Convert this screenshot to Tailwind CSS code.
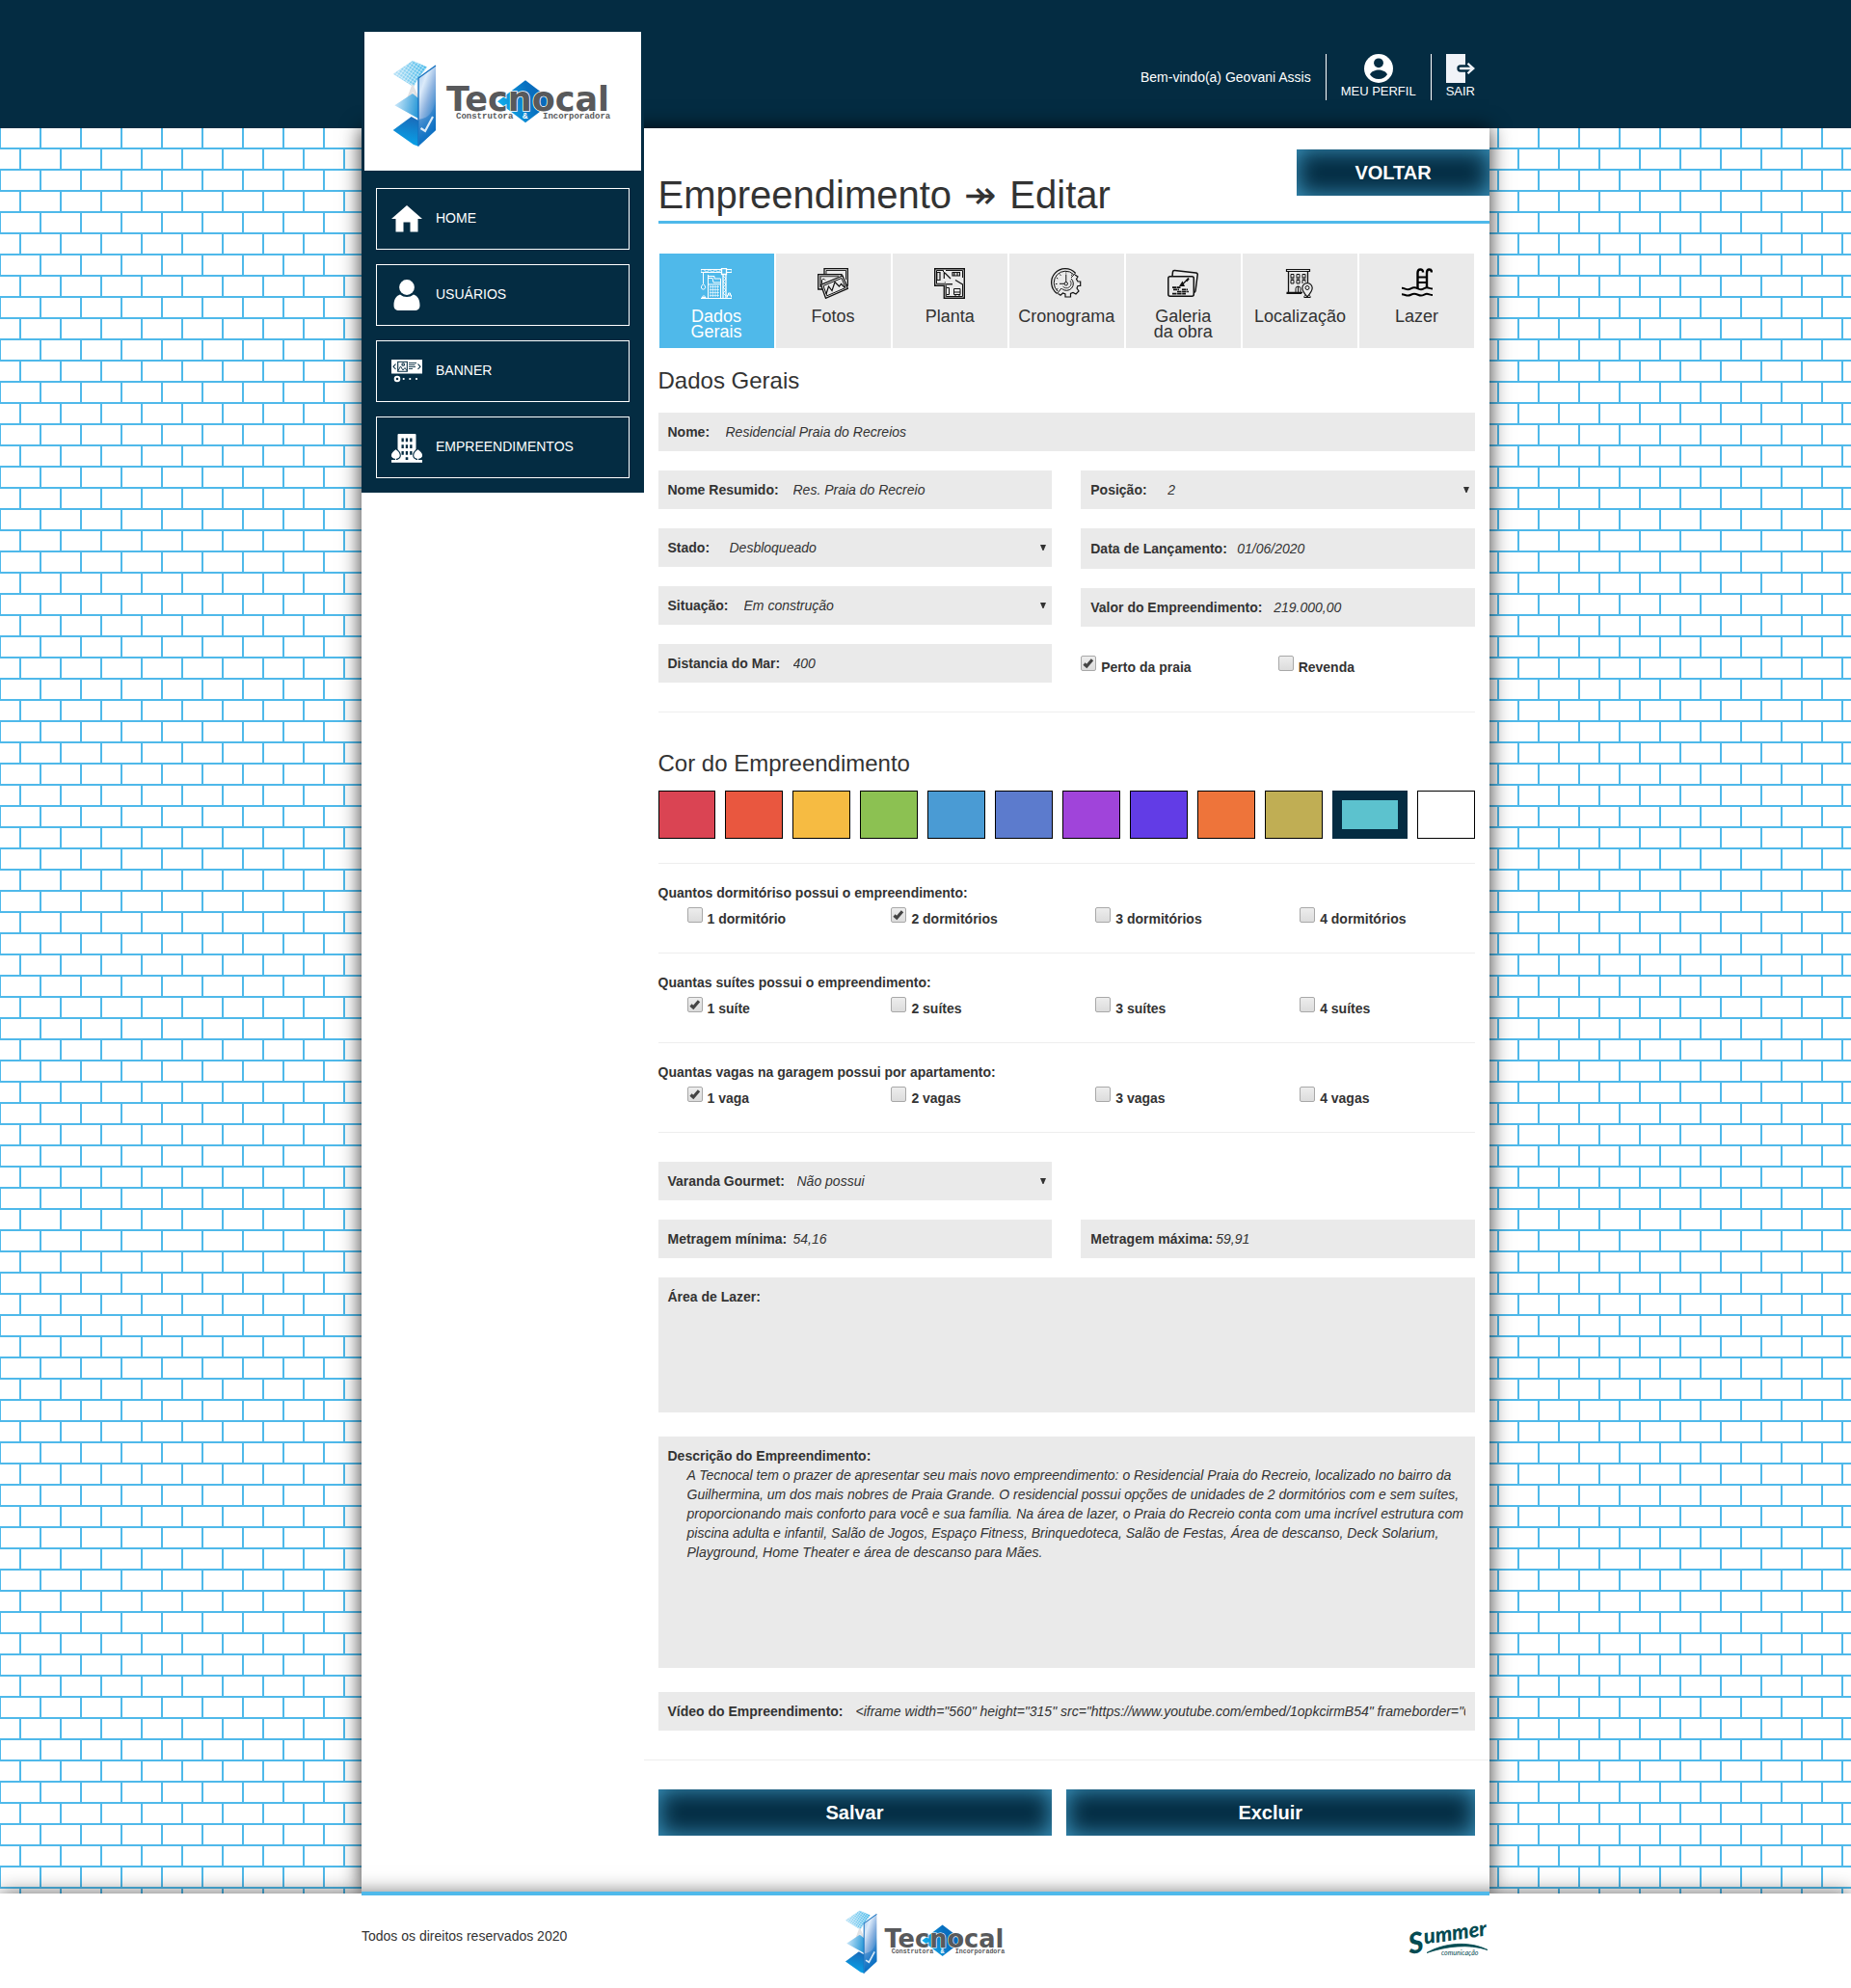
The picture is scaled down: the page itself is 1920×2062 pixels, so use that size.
<!DOCTYPE html>
<html lang="pt-BR">
<head>
<meta charset="utf-8">
<meta name="viewport" content="width=device-width, initial-scale=1">
<title>Tecnocal - Empreendimento - Editar</title>
<script src="https://cdn.jsdelivr.net/npm/@tailwindcss/browser@4"></script>
</head>
<body class="bg-white font-[family-name:'Liberation_Sans',Arial,sans-serif] text-sm leading-5 text-[#333]">

<!-- Shared gradients and symbols -->
<svg class="absolute size-0" aria-hidden="true">
  <defs>
    <linearGradient id="gPanel" x1="0" y1="0" x2="0.6" y2="1"><stop offset="0" stop-color="#9cc4ea"/><stop offset=".3" stop-color="#dcebfa"/><stop offset=".55" stop-color="#8fb4e0"/><stop offset="1" stop-color="#0a6fc2"/></linearGradient>
    <linearGradient id="gShade" x1="0" y1="0" x2="0" y2="1"><stop offset="0" stop-color="#1273c6" stop-opacity=".1"/><stop offset="1" stop-color="#0a6fc2"/></linearGradient>
    <linearGradient id="gSky" x1="0" y1="0" x2="1" y2="0"><stop offset="0" stop-color="#b5e0f6"/><stop offset="1" stop-color="#3db5e8"/></linearGradient>
    <linearGradient id="gMid" x1="0" y1="0.3" x2="1" y2="0.5"><stop offset="0" stop-color="#cfeafb"/><stop offset="1" stop-color="#2c9ad8"/></linearGradient>
    <linearGradient id="gDeep" x1="0.6" y1="0" x2="0.4" y2="1"><stop offset="0" stop-color="#1a6cba"/><stop offset="1" stop-color="#06a6ec"/></linearGradient>
    <linearGradient id="gGem" x1="0" y1="0.6" x2="1" y2="0.3"><stop offset="0" stop-color="#12b0ee"/><stop offset=".6" stop-color="#0870c0"/><stop offset="1" stop-color="#0a63b4"/></linearGradient>
    <pattern id="pGrid" width="3" height="3" patternUnits="userSpaceOnUse" patternTransform="rotate(35)"><path d="M0 0H3M0 0V3" stroke="#fff" stroke-width=".9"/></pattern>
  </defs>
  <symbol id="mark" viewBox="0 0 228 90">
    <path d="M0.7 14.7 21 1 36 7.5 27 19 22 28Z" fill="url(#gSky)"/>
    <path d="M0.7 14.7 21 1 36 7.5 27 19 22 28Z" fill="url(#pGrid)"/>
    <path d="M15 45 21 29 27 42" fill="none" stroke="#e2e2e4" stroke-width="3.5"/>
    <path d="M2.3 47.3 21 35 27 40V61Z" fill="url(#gMid)"/>
    <path d="M0.7 73 19.7 59 27 63V89.7L22 88Z" fill="url(#gDeep)"/>
    <path d="M27 19 45 5.7V73L27 89.7Z" fill="url(#gPanel)"/>
    <path d="M27.5 62C36 60 42 58 45 40V73L27.5 89Z" fill="url(#gShade)"/>
    <path d="M27 89.5V19L45 6" fill="none" stroke="#1470bf" stroke-width="1.4"/>
    <path d="M29.500 71 34 74 42 59" fill="none" stroke="#dcebf8" stroke-width="2.200"/>
    <path d="M138 21.300 167 43.300 138 65.300 109 43.300Z" fill="url(#gGem)"/>
  </symbol>
  <symbol id="check" viewBox="0 0 16 16"><path d="M3.500 8.500 6.200 11 12 4.300" fill="none" stroke="#444" stroke-width="3.200"/></symbol>
  <symbol id="arrow" viewBox="0 0 6 6"><path d="M0 0H6L3.500 6H2.500Z" fill="#333"/></symbol>
</svg>

<header class="h-[133px] bg-[#042c42] text-white">
  <div class="mx-auto flex max-w-[1170px] justify-end pt-14 pr-[15px]">
    <p class="flex h-12 items-center border-r border-white pr-[15px]">Bem-vindo(a) Geovani Assis</p>
    <a href="#perfil" class="flex h-12 flex-col items-center border-r border-white px-[15px] text-[13px] leading-[18px]">
      <svg class="size-[30px]" viewBox="0 0 30 30" aria-hidden="true"><circle cx="15" cy="15" r="15" fill="#fff"/><circle cx="15" cy="9.300" r="4.900" fill="#042c42"/><path d="M6 21.300C7 18 12 16.500 15 16.500S23 18 24 21.300C22 24.300 19 26 15 26S8 24.300 6 21.300Z" fill="#042c42"/></svg>
      MEU PERFIL
    </a>
    <a href="#sair" class="flex h-12 flex-col items-center pl-[15px] text-[13px] leading-[18px]">
      <svg class="size-[30px]" viewBox="0 0 30 30" aria-hidden="true"><path d="M0 0H20V30H0Z" fill="#f0f3f8"/><path d="M20 11.300H15a3.700 3.700 0 0 0 0 7.400H20Z" fill="#042c42"/><path d="M15 13.700H25L21.700 10.500 23.300 9 30 15 23.300 21 21.700 19.500 25 16.300H15a1.300 1.300 0 0 1 0-2.600Z" fill="#f0f3f8"/></svg>
      SAIR
    </a>
  </div>
</header>

<main class="bg-white bg-[linear-gradient(0deg,#4fb9ea_2px,transparent_2px),conic-gradient(from_270deg_at_2px_22px,#4fb9ea_90deg,transparent_0),conic-gradient(from_270deg_at_2px_22px,#4fb9ea_90deg,transparent_0)] bg-[size:42px_22px,42px_44px,42px_44px] bg-[position:0_0,-1px_0,20px_22px]">
  <div class="mx-auto flex max-w-[1170px] items-start bg-white shadow-[0_0_20px_rgba(0,0,0,0.8)]">

    <aside class="relative -mt-[103px] w-1/4 shrink-0 bg-[#042c42] p-[3px] pb-[15px]">
      <a href="#home" class="flex h-36 items-center justify-center bg-white pt-1" aria-label="Tecnocal">
        <svg class="h-[90px] w-[228px] overflow-visible" viewBox="0 0 228 90" fill="#58595b" font-weight="bold" aria-hidden="true">
          <use href="#mark" width="228" height="90"/>
          <text x="56" y="53" font-family="DejaVu Sans, sans-serif" font-size="35" stroke="#fff" stroke-width="1.500" paint-order="stroke">Tecnocal</text>
          <g font-family="Liberation Mono, monospace" font-size="9"><text x="66" y="61">Construtora</text><text x="135" y="61" fill="#fff">&amp;</text><text x="156" y="61">Incorporadora</text></g>
        </svg>
      </a>
      <nav class="flex flex-col gap-[15px] px-3 pt-[18px] text-white">
        <a href="#home" class="flex h-16 items-center gap-3.5 border border-white px-[15px]">
          <svg class="size-8" viewBox="0 0 32 32" fill="#fff" aria-hidden="true"><path d="M16 2 32 16H27.500V29.500H19.500V19.500H12.500V29.500H4.500V16H0Z"/></svg>
          <span class="pb-0.5">HOME</span>
        </a>
        <a href="#usuarios" class="flex h-16 items-center gap-3.5 border border-white px-[15px]">
          <svg class="size-8" viewBox="0 0 32 32" fill="#fff" aria-hidden="true"><circle cx="16" cy="8" r="7.900"/><path d="M9 15.500C11 17.200 13.500 18 16 18S21 17.200 23 15.500C27.500 17 29.500 21 29.500 26.500 29.500 30.500 27.500 32 24 32H8C4.500 32 2.500 30.500 2.500 26.500 2.500 21 4.500 17 9 15.500Z"/></svg>
          <span class="pb-0.5">USUÁRIOS</span>
        </a>
        <a href="#banner" class="flex h-16 items-center gap-3.5 border border-white px-[15px]">
          <svg class="size-8" viewBox="0 0 32 32" aria-hidden="true"><path d="M0 4H32V18.500H0Z" fill="#fff"/><g fill="none" stroke="#042c42" stroke-width="1.100"><path d="M4.500 8.500 2 11.300 4.500 14M27.500 8.500 30 11.300 27.500 14"/><path d="M6.700 6.300H16.300V16.300H6.700Z"/><path d="M7 15.500 9.500 11 12 15 14 12.500 16 15.500M18 7.500H26M18 9.500H24.500M18 11.500H25M18 13.500H22" stroke-width=".9"/><circle cx="12.200" cy="9" r="1.300"/></g><circle cx="6" cy="24" r="2.300" fill="none" stroke="#fff" stroke-width="2"/><g fill="#fff"><circle cx="12.700" cy="24" r="1.100"/><circle cx="19.300" cy="24" r="1.100"/><circle cx="26" cy="24" r="1.100"/></g></svg>
          <span class="pb-0.5">BANNER</span>
        </a>
        <a href="#empreendimentos" class="flex h-16 items-center gap-3.5 border border-white px-[15px]">
          <svg class="size-8" viewBox="0 0 32 32" aria-hidden="true"><path d="M6.500 3Q6.500 2 7.500 2H24.500Q25.500 2 25.500 3V29H6.500Z" fill="#fff"/><g fill="#042c42"><path d="M10.500 6.500h2.300v3.700h-2.300zM14.800 6.500h2.300v3.700h-2.300zM19.200 6.500h2.300v3.700h-2.300zM10.500 13.300h2.300v3.700h-2.300zM14.800 13.300h2.300v3.700h-2.300zM19.200 13.300h2.300v3.700h-2.300zM10.500 20h2.300v3.700h-2.300zM14.800 20h2.300v3.700h-2.300zM19.200 20h2.300v3.700h-2.300zM14.700 26.300h2.600v2.700h-2.600z"/></g><g fill="#fff" stroke="#042c42" stroke-width="1.100"><path d="M4.500 17.500C7.500 19.500 9.300 21.500 9.300 24.300 9.300 26.500 7.500 28 5.500 28.200V30H3.500V28.200C1.500 28 -.6 26.500 -.6 24.300 -.6 21.500 1.500 19.500 4.500 17.500Z"/><path d="M27.500 17.500C24.500 19.500 22.700 21.500 22.700 24.300 22.700 26.500 24.500 28 26.500 28.200V30H28.500V28.200C30.500 28 32.600 26.500 32.600 24.300 32.600 21.500 30.500 19.500 27.500 17.500Z"/></g><path d="M0 29H32V31.800H0Z" fill="#fff"/></svg>
          <span class="pb-0.5">EMPREENDIMENTOS</span>
        </a>
      </nav>
    </aside>

    <form class="min-w-0 flex-1 pb-[60px]">
      <div class="ml-[15px] flex items-start justify-between border-b-3 border-[#4fb9ea] pt-[22px] pb-[5px]">
        <h1 class="mt-[25px] h-11 text-[40px] leading-[44px]">Empreendimento <span class="mx-0.5">↠</span> Editar</h1>
        <button type="button" class="h-12 w-[200px] bg-[#042c42] text-xl font-bold text-white shadow-[inset_0_0_24px_rgba(79,185,234,0.8)]">VOLTAR</button>
      </div>

      <div class="px-[15px]">
        <nav class="mt-[31px] flex text-center text-lg leading-4">
          <a href="#dados" class="mx-px flex flex-1 basis-0 flex-col items-center gap-2.5 bg-[#4fb9ea] pt-[15px] pb-[9px] text-white">
            <svg class="size-8" viewBox="0 0 32 32" fill="none" stroke="#fff" aria-hidden="true"><path d="M0 1.500H21M0 4.500H21M0 1V5M3 1.500 6 4.500 9 1.500 12 4.500 15 1.500 18 4.500 21 1.500M27 1.500H32V4.500H27"/><path d="M21.500.5H26.500V6.500H21.500Z" stroke-width="1.300"/><path d="M23 6V31M26 6V31" stroke-width="1.300"/><path d="M23 8 26 11 23 14 26 17 23 20 26 23 23 26 26 29" stroke-width=".8"/><path d="M2.500 5V16M2.500 16.500 .8 18.500A2.200 2.200 0 1 0 4.400 18.800Z"/><path d="M7.500 31V7M7.500 8.500H14M7.500 10.500H12L13 15H20.500V31M14 8.500V11H20.500V16M7.500 17H20.500"/><path d="M10 18V30M12.500 18V30M15 18V30M17.500 18V30M9 19.500H19M9 22.500H19M9 25.500H19M9 28.500H19" stroke-width=".6"/><path d="M0 31.500H32" /><path d="M1 30.500 3 28.500 5 30.500ZM27.500 30.500V28H31.500V30.500M28.500 28V26H30.500V28"/></svg>
            <span>Dados<br>Gerais</span>
          </a>
          <a href="#fotos" class="mx-px flex flex-1 basis-0 flex-col items-center gap-2.5 bg-[#eaeaea] pt-[15px] pb-[9px]">
            <svg class="size-8" viewBox="0 0 32 32" fill="none" stroke="#111" aria-hidden="true"><path d="M7 6V.7H31.300V18H30" stroke-width="1.300"/><path d="M9 6V2.500H29.500V12" stroke-width=".9"/><path d="M5 22H.7V6.700H25V9" stroke-width="1.300"/><path d="M3 20V8.500H22" stroke-width="1.600" stroke="#555"/><path d="M4.500 16V12.500A2 2 0 0 1 8 12.500"/><path d="M3.500 17.300 26 8 31.300 21.300 8.500 31.300Z" fill="#eaeaea" stroke-width="1.300"/><path d="M6 18.500 25 10.500 29 20.500 9.800 28.800Z"/><path d="M9 27 11.500 19 15 23.500 18 14.500 22.500 19 24.500 16.500 28 20" stroke-width="1.200"/></svg>
            <span>Fotos</span>
          </a>
          <a href="#planta" class="mx-px flex flex-1 basis-0 flex-col items-center gap-2.5 bg-[#eaeaea] pt-[15px] pb-[9px]">
            <svg class="size-8" viewBox="0 0 32 32" fill="none" stroke="#111" aria-hidden="true"><path d="M.7.700H31.300V31.300H10.300V18.300H.7Z" stroke-width="1.400"/><path d="M2.500 2.500H9.500V4M12 2.500H29.500V10M29.500 16.500V29.500H12.300V16.500H19M2.500 2.500V16.300H12" /><path d="M2.800 4.500H6V12.500H2.800ZM10.300 4V11M11 5 17 11M18.500 4.500H27M19 4.500V8H26.500V4.500M21 5V7.500M24 5V7.500M29.500 17 22 12.500" stroke-width="1.200"/><path d="M13 20.500H15.500V27.500H13M20.500 21.500H27V27.500H20.500ZM20.500 25H27M22 27.500V29.500M26 27.500V29.500"/><path d="M6 17.300H19M11.300 14V30" stroke="#777"/></svg>
            <span>Planta</span>
          </a>
          <a href="#cronograma" class="mx-px flex flex-1 basis-0 flex-col items-center gap-2.5 bg-[#eaeaea] pt-[15px] pb-[9px]">
            <svg class="size-8" viewBox="0 0 32 32" fill="none" stroke="#111" aria-hidden="true"><path d="M6.500 26.500A14.300 14.300 0 1 1 25.500 5.300" stroke-width="1.300"/><path d="M7 24A11.800 11.800 0 1 1 23.500 6.500"/><path d="M25.500 5.300 21 10M6.500 26.500 11 21"/><path d="M25 7 28 9 26.500 11.500 28 14H30.700V18.500H28L27 21 29 24 26 27 23 25.500 20.500 26.500V30H15V27L12.500 26 10 28.300 7.500 26.500" stroke-width="1.200"/><path d="M21 11A7 7 0 0 1 11.500 21.500"/><path d="M20 13A4.500 4.500 0 1 1 12.500 19" stroke-width=".8"/><circle cx="15.800" cy="16.300" r="1.700"/><path d="M15.800 14.500V6.500M14 16.300H9M15.800 4.500V5.500M5 16.500H6.500M9.500 6.500 10.300 7.800M6 10.300 7.300 11M22 6.500 21.300 7.800M6 22.300 7.300 21.500"/></svg>
            <span>Cronograma</span>
          </a>
          <a href="#galeria" class="mx-px flex flex-1 basis-0 flex-col items-center gap-2.5 bg-[#eaeaea] pt-[15px] pb-[9px]">
            <svg class="size-8" viewBox="0 0 32 32" fill="none" stroke="#111" aria-hidden="true"><path d="M5 8.500 5.500 4Q5.800 2.300 7.500 2.500L29.500 5Q31.500 5.300 31.200 7L29 24Q28.800 25.500 27 25.500" stroke-width="1.500"/><rect x=".8" y="8.800" width="26.500" height="20.500" rx="2" stroke-width="1.500"/><path d="M12 19H18L15.500 13.500Z" fill="#111" stroke="none"/><path d="M15.500 17 22 10.500" stroke-width="1.200"/><path d="M19.500 13.500 22 11" stroke-width="2"/><path d="M5 20.200H14M6 22.300H12M15 22.300H21" stroke-width="1.700" stroke-dasharray="4 .5"/><path d="M10 24.500H22M5 26.600H19" stroke-width="1.600" stroke-dasharray="4.500 .6"/></svg>
            <span>Galeria<br>da obra</span>
          </a>
          <a href="#localizacao" class="mx-px flex flex-1 basis-0 flex-col items-center gap-2.5 bg-[#eaeaea] pt-[15px] pb-[9px]">
            <svg class="size-8" viewBox="0 0 32 32" fill="none" stroke="#111" aria-hidden="true"><path d="M2.500 1.500H26.500V3.500H2.500Z" stroke-width="1.200"/><path d="M4.500 4V25.500M24.500 4V15M2.500 25.500H19" stroke-width="1.300"/><path d="M2.500 26.500H18"/><path d="M7 6.500H10V10H7ZM13 6.500H16V10H13ZM19 6.500H22V10H19ZM7 12.500H10V16H7ZM13 12.500H16V16H13ZM19 16V12.500H22V14.500M6.500 11H10.500M12.500 11H16.500M18.500 11H22.500"/><path d="M12 25V21.500A2.500 2.500 0 0 1 17 21.500V25M14.500 19V25"/><path d="M24 30C21 26.500 18.800 23.500 18.800 20.800A5.200 5.200 0 0 1 29.200 20.800C29.200 23.500 27 26.500 24 30Z" stroke-width="1.200"/><circle cx="24" cy="20.500" r="2"/><path d="M20.500 29.500 22 28.500M27.500 29.500 26 28.500M20.500 30.500H27.500"/></svg>
            <span>Localização</span>
          </a>
          <a href="#lazer" class="mx-px flex flex-1 basis-0 flex-col items-center gap-2.5 bg-[#eaeaea] pt-[15px] pb-[9px]">
            <svg class="size-8" viewBox="0 0 32 32" fill="none" stroke="#000" stroke-width="2.400" aria-hidden="true"><path d="M16.500 21V5Q16.500 1.500 19.300 1.500T22 4.500M26 21V5Q26 1.500 28.500 1.500T31 4.500"/><path d="M16.500 9.500H26M16.500 15H26" stroke-width="1.800"/><path d="M0 20.800C3 20.800 4 22.300 6.500 22.300S10 20.300 13 20.300 17.500 22.300 20 22.300 24 20.300 26 20.300 29.500 21.500 32 21.500M0 27.300C3 27.300 4 28.600 6.500 28.600S10 26.800 13 26.800 17.500 28.600 20 28.600 24 26.800 26 26.800 29.500 28 32 28" stroke-width="2"/></svg>
            <span>Lazer</span>
          </a>
        </nav>

        <section>
          <h2 class="pt-[21px] pb-5 text-2xl leading-[26px]">Dados Gerais</h2>

          <div class="flex h-10 items-center bg-[#eaeaea] px-2.5">
            <label for="nome" class="w-[60px] shrink-0 font-bold">Nome:</label>
            <input id="nome" type="text" value="Residencial Praia do Recreios" class="min-w-0 flex-1 italic outline-none">
          </div>

          <div class="mt-5 grid grid-cols-2 gap-x-[30px]">
            <div class="flex flex-col gap-5">
              <div class="flex h-10 items-center bg-[#eaeaea] px-2.5">
                <label for="resumido" class="w-[130px] shrink-0 font-bold">Nome Resumido:</label>
                <input id="resumido" type="text" value="Res. Praia do Recreio" class="min-w-0 flex-1 italic outline-none">
              </div>
              <div class="flex h-10 items-center bg-[#eaeaea] pr-1.5 pl-2.5">
                <label for="stado" class="w-16 shrink-0 font-bold">Stado:</label>
                <select id="stado" class="min-w-0 flex-1 appearance-none italic outline-none"><option>Desbloqueado</option><option>Bloqueado</option></select>
                <svg class="size-1.5" aria-hidden="true"><use href="#arrow"/></svg>
              </div>
              <div class="flex h-10 items-center bg-[#eaeaea] pr-1.5 pl-2.5">
                <label for="situacao" class="w-[79px] shrink-0 font-bold">Situação:</label>
                <select id="situacao" class="min-w-0 flex-1 appearance-none italic outline-none"><option>Em construção</option><option>Lançamento</option></select>
                <svg class="size-1.5" aria-hidden="true"><use href="#arrow"/></svg>
              </div>
              <div class="flex h-10 items-center bg-[#eaeaea] px-2.5">
                <label for="distancia" class="w-[130px] shrink-0 font-bold">Distancia do Mar:</label>
                <input id="distancia" type="text" value="400" class="min-w-0 flex-1 italic outline-none">
              </div>
            </div>
            <div class="flex flex-col gap-5">
              <div class="flex h-10 items-center bg-[#eaeaea] pr-1.5 pl-2.5">
                <label for="posicao" class="w-20 shrink-0 font-bold">Posição:</label>
                <select id="posicao" class="min-w-0 flex-1 appearance-none italic outline-none"><option>2</option><option>1</option></select>
                <svg class="size-1.5" aria-hidden="true"><use href="#arrow"/></svg>
              </div>
              <div class="flex h-[42px] items-center bg-[#eaeaea] px-2.5">
                <label for="data" class="w-[152px] shrink-0 font-bold">Data de Lançamento:</label>
                <input id="data" type="text" value="01/06/2020" class="min-w-0 flex-1 italic outline-none">
              </div>
              <div class="flex h-10 items-center bg-[#eaeaea] px-2.5">
                <label for="valor" class="w-[190px] shrink-0 font-bold">Valor do Empreendimento:</label>
                <input id="valor" type="text" value="219.000,00" class="min-w-0 flex-1 italic outline-none">
              </div>
              <div class="grid grid-cols-2 pt-2.5 font-bold">
                <label class="flex items-start gap-[5px]"><span class="relative size-4 shrink-0"><input type="checkbox" checked class="peer block size-4 appearance-none rounded-xs border border-[#a8a8a8] bg-linear-to-b from-[#ededed] to-[#dcdcdc]"><svg class="pointer-events-none absolute inset-0 hidden size-4 peer-checked:block" aria-hidden="true"><use href="#check"/></svg></span><span class="pt-0.5">Perto da praia</span></label>
                <label class="flex items-start gap-[5px]"><span class="relative size-4 shrink-0"><input type="checkbox" class="peer block size-4 appearance-none rounded-xs border border-[#a8a8a8] bg-linear-to-b from-[#ededed] to-[#dcdcdc]"><svg class="pointer-events-none absolute inset-0 hidden size-4 peer-checked:block" aria-hidden="true"><use href="#check"/></svg></span><span class="pt-0.5">Revenda</span></label>
              </div>
            </div>
          </div>
        </section>

        <section class="mt-[30px] border-t border-[#eee] pt-10">
          <h2 class="text-2xl leading-[26px]">Cor do Empreendimento</h2>
          <div class="mt-[15px] flex gap-2.5">
            <input type="radio" name="cor" aria-label="Vermelho" class="h-[50px] flex-1 basis-0 appearance-none border border-black bg-[#da4453] checked:border-[10px] checked:border-[#042c42]">
            <input type="radio" name="cor" aria-label="Laranja escuro" class="h-[50px] flex-1 basis-0 appearance-none border border-black bg-[#e9573f] checked:border-[10px] checked:border-[#042c42]">
            <input type="radio" name="cor" aria-label="Amarelo" class="h-[50px] flex-1 basis-0 appearance-none border border-black bg-[#f6bb42] checked:border-[10px] checked:border-[#042c42]">
            <input type="radio" name="cor" aria-label="Verde" class="h-[50px] flex-1 basis-0 appearance-none border border-black bg-[#8cc152] checked:border-[10px] checked:border-[#042c42]">
            <input type="radio" name="cor" aria-label="Azul claro" class="h-[50px] flex-1 basis-0 appearance-none border border-black bg-[#4a9bd4] checked:border-[10px] checked:border-[#042c42]">
            <input type="radio" name="cor" aria-label="Azul" class="h-[50px] flex-1 basis-0 appearance-none border border-black bg-[#5c7bcd] checked:border-[10px] checked:border-[#042c42]">
            <input type="radio" name="cor" aria-label="Roxo" class="h-[50px] flex-1 basis-0 appearance-none border border-black bg-[#a044da] checked:border-[10px] checked:border-[#042c42]">
            <input type="radio" name="cor" aria-label="Violeta" class="h-[50px] flex-1 basis-0 appearance-none border border-black bg-[#623ce6] checked:border-[10px] checked:border-[#042c42]">
            <input type="radio" name="cor" aria-label="Laranja" class="h-[50px] flex-1 basis-0 appearance-none border border-black bg-[#ee743a] checked:border-[10px] checked:border-[#042c42]">
            <input type="radio" name="cor" aria-label="Oliva" class="h-[50px] flex-1 basis-0 appearance-none border border-black bg-[#c0ae54] checked:border-[10px] checked:border-[#042c42]">
            <input type="radio" name="cor" aria-label="Turquesa" checked class="h-[50px] flex-1 basis-0 appearance-none border border-black bg-[#5cc2ce] checked:border-[10px] checked:border-[#042c42]">
            <input type="radio" name="cor" aria-label="Branco" class="h-[50px] flex-1 basis-0 appearance-none border border-black bg-white checked:border-[10px] checked:border-[#042c42]">
          </div>
        </section>

        <fieldset class="mt-[25px] border-t border-[#eee] pt-5 pb-[25px] font-bold">
          <legend class="contents">Quantos dormitóriso possui o empreendimento:</legend>
          <div class="grid grid-cols-4 pt-[5px]">
            <label class="flex items-start gap-[5px] pl-[30px]"><span class="relative size-4 shrink-0"><input type="checkbox" class="peer block size-4 appearance-none rounded-xs border border-[#a8a8a8] bg-linear-to-b from-[#ededed] to-[#dcdcdc]"><svg class="pointer-events-none absolute inset-0 hidden size-4 peer-checked:block" aria-hidden="true"><use href="#check"/></svg></span><span class="pt-0.5">1 dormitório</span></label>
            <label class="flex items-start gap-[5px] pl-[30px]"><span class="relative size-4 shrink-0"><input type="checkbox" checked class="peer block size-4 appearance-none rounded-xs border border-[#a8a8a8] bg-linear-to-b from-[#ededed] to-[#dcdcdc]"><svg class="pointer-events-none absolute inset-0 hidden size-4 peer-checked:block" aria-hidden="true"><use href="#check"/></svg></span><span class="pt-0.5">2 dormitórios</span></label>
            <label class="flex items-start gap-[5px] pl-[30px]"><span class="relative size-4 shrink-0"><input type="checkbox" class="peer block size-4 appearance-none rounded-xs border border-[#a8a8a8] bg-linear-to-b from-[#ededed] to-[#dcdcdc]"><svg class="pointer-events-none absolute inset-0 hidden size-4 peer-checked:block" aria-hidden="true"><use href="#check"/></svg></span><span class="pt-0.5">3 dormitórios</span></label>
            <label class="flex items-start gap-[5px] pl-[30px]"><span class="relative size-4 shrink-0"><input type="checkbox" class="peer block size-4 appearance-none rounded-xs border border-[#a8a8a8] bg-linear-to-b from-[#ededed] to-[#dcdcdc]"><svg class="pointer-events-none absolute inset-0 hidden size-4 peer-checked:block" aria-hidden="true"><use href="#check"/></svg></span><span class="pt-0.5">4 dormitórios</span></label>
          </div>
        </fieldset>

        <fieldset class="border-t border-[#eee] pt-5 pb-[25px] font-bold">
          <legend class="contents">Quantas suítes possui o empreendimento:</legend>
          <div class="grid grid-cols-4 pt-[5px]">
            <label class="flex items-start gap-[5px] pl-[30px]"><span class="relative size-4 shrink-0"><input type="checkbox" checked class="peer block size-4 appearance-none rounded-xs border border-[#a8a8a8] bg-linear-to-b from-[#ededed] to-[#dcdcdc]"><svg class="pointer-events-none absolute inset-0 hidden size-4 peer-checked:block" aria-hidden="true"><use href="#check"/></svg></span><span class="pt-0.5">1 suíte</span></label>
            <label class="flex items-start gap-[5px] pl-[30px]"><span class="relative size-4 shrink-0"><input type="checkbox" class="peer block size-4 appearance-none rounded-xs border border-[#a8a8a8] bg-linear-to-b from-[#ededed] to-[#dcdcdc]"><svg class="pointer-events-none absolute inset-0 hidden size-4 peer-checked:block" aria-hidden="true"><use href="#check"/></svg></span><span class="pt-0.5">2 suítes</span></label>
            <label class="flex items-start gap-[5px] pl-[30px]"><span class="relative size-4 shrink-0"><input type="checkbox" class="peer block size-4 appearance-none rounded-xs border border-[#a8a8a8] bg-linear-to-b from-[#ededed] to-[#dcdcdc]"><svg class="pointer-events-none absolute inset-0 hidden size-4 peer-checked:block" aria-hidden="true"><use href="#check"/></svg></span><span class="pt-0.5">3 suítes</span></label>
            <label class="flex items-start gap-[5px] pl-[30px]"><span class="relative size-4 shrink-0"><input type="checkbox" class="peer block size-4 appearance-none rounded-xs border border-[#a8a8a8] bg-linear-to-b from-[#ededed] to-[#dcdcdc]"><svg class="pointer-events-none absolute inset-0 hidden size-4 peer-checked:block" aria-hidden="true"><use href="#check"/></svg></span><span class="pt-0.5">4 suítes</span></label>
          </div>
        </fieldset>

        <fieldset class="border-t border-[#eee] pt-5 pb-[25px] font-bold">
          <legend class="contents">Quantas vagas na garagem possui por apartamento:</legend>
          <div class="grid grid-cols-4 pt-[5px]">
            <label class="flex items-start gap-[5px] pl-[30px]"><span class="relative size-4 shrink-0"><input type="checkbox" checked class="peer block size-4 appearance-none rounded-xs border border-[#a8a8a8] bg-linear-to-b from-[#ededed] to-[#dcdcdc]"><svg class="pointer-events-none absolute inset-0 hidden size-4 peer-checked:block" aria-hidden="true"><use href="#check"/></svg></span><span class="pt-0.5">1 vaga</span></label>
            <label class="flex items-start gap-[5px] pl-[30px]"><span class="relative size-4 shrink-0"><input type="checkbox" class="peer block size-4 appearance-none rounded-xs border border-[#a8a8a8] bg-linear-to-b from-[#ededed] to-[#dcdcdc]"><svg class="pointer-events-none absolute inset-0 hidden size-4 peer-checked:block" aria-hidden="true"><use href="#check"/></svg></span><span class="pt-0.5">2 vagas</span></label>
            <label class="flex items-start gap-[5px] pl-[30px]"><span class="relative size-4 shrink-0"><input type="checkbox" class="peer block size-4 appearance-none rounded-xs border border-[#a8a8a8] bg-linear-to-b from-[#ededed] to-[#dcdcdc]"><svg class="pointer-events-none absolute inset-0 hidden size-4 peer-checked:block" aria-hidden="true"><use href="#check"/></svg></span><span class="pt-0.5">3 vagas</span></label>
            <label class="flex items-start gap-[5px] pl-[30px]"><span class="relative size-4 shrink-0"><input type="checkbox" class="peer block size-4 appearance-none rounded-xs border border-[#a8a8a8] bg-linear-to-b from-[#ededed] to-[#dcdcdc]"><svg class="pointer-events-none absolute inset-0 hidden size-4 peer-checked:block" aria-hidden="true"><use href="#check"/></svg></span><span class="pt-0.5">4 vagas</span></label>
          </div>
        </fieldset>

        <section class="border-t border-[#eee] pt-[30px]">
          <div class="grid grid-cols-2 gap-x-[30px] gap-y-5">
            <div class="flex h-10 items-center bg-[#eaeaea] pr-1.5 pl-2.5">
              <label for="varanda" class="w-[134px] shrink-0 font-bold">Varanda Gourmet:</label>
              <select id="varanda" class="min-w-0 flex-1 appearance-none italic outline-none"><option>Não possui</option><option>Possui</option></select>
              <svg class="size-1.5" aria-hidden="true"><use href="#arrow"/></svg>
            </div>
            <div class="col-start-1 flex h-10 items-center bg-[#eaeaea] px-2.5">
              <label for="minima" class="w-[130px] shrink-0 font-bold">Metragem mínima:</label>
              <input id="minima" type="text" value="54,16" class="min-w-0 flex-1 italic outline-none">
            </div>
            <div class="flex h-10 items-center bg-[#eaeaea] px-2.5">
              <label for="maxima" class="w-[130px] shrink-0 font-bold">Metragem máxima:</label>
              <input id="maxima" type="text" value="59,91" class="min-w-0 flex-1 italic outline-none">
            </div>
          </div>
          <div class="mt-5 flex flex-col bg-[#eaeaea] p-2.5">
            <label for="area" class="font-bold">Área de Lazer:</label>
            <textarea id="area" class="h-[100px] resize-none pl-5 italic outline-none"></textarea>
          </div>
          <div class="mt-[25px] flex flex-col bg-[#eaeaea] p-2.5">
            <label for="descricao" class="font-bold">Descrição do Empreendimento:</label>
            <textarea id="descricao" class="h-[200px] resize-none overflow-hidden pl-5 italic outline-none">A Tecnocal tem o prazer de apresentar seu mais novo empreendimento: o Residencial Praia do Recreio, localizado no bairro da Guilhermina, um dos mais nobres de Praia Grande. O residencial possui opções de unidades de 2 dormitórios com e sem suítes, proporcionando mais conforto para você e sua família. Na área de lazer, o Praia do Recreio conta com uma incrível estrutura com piscina adulta e infantil, Salão de Jogos, Espaço Fitness, Brinquedoteca, Salão de Festas, Área de descanso, Deck Solarium, Playground, Home Theater e área de descanso para Mães.</textarea>
          </div>
          <div class="mt-[25px] flex h-10 items-center bg-[#eaeaea] px-2.5">
            <label for="video" class="w-[195px] shrink-0 font-bold">Vídeo do Empreendimento:</label>
            <input id="video" type="text" value="&lt;iframe width=&quot;560&quot; height=&quot;315&quot; src=&quot;https://www.youtube.com/embed/1opkcirmB54&quot; frameborder=&quot;0&quot; allowfullscreen&gt;&lt;/iframe&gt;" class="min-w-0 flex-1 italic outline-none">
          </div>
        </section>
      </div>

      <div class="mt-[30px] flex gap-[15px] border-t border-[#eee] px-[15px] pt-[30px]">
        <button type="submit" class="h-12 w-[408px] bg-[#042c42] text-xl font-bold text-white shadow-[inset_0_0_24px_rgba(79,185,234,0.8)]">Salvar</button>
        <button type="button" class="h-12 flex-1 bg-[#042c42] text-xl font-bold text-white shadow-[inset_0_0_24px_rgba(79,185,234,0.8)]">Excluir</button>
      </div>
    </form>
  </div>
</main>

<footer class="relative flow-root bg-white shadow-[0_0_20px_rgba(0,0,0,0.6)]">
  <div class="relative mx-auto -mt-0.5 grid max-w-[1170px] grid-cols-3 items-center border-t-4 border-[#4fb9ea] py-[15px]">
    <p class="pb-3">Todos os direitos reservados 2020</p>
    <a href="#home" class="justify-self-center" aria-label="Tecnocal">
      <svg class="h-[66px] w-[168px] overflow-visible" viewBox="0 0 228 90" fill="#58595b" font-weight="bold" aria-hidden="true">
        <use href="#mark" width="228" height="90"/>
        <text x="56" y="53" font-family="DejaVu Sans, sans-serif" font-size="35" stroke="#fff" stroke-width="1.500" paint-order="stroke">Tecnocal</text>
        <g font-family="Liberation Mono, monospace" font-size="9"><text x="66" y="61">Construtora</text><text x="135" y="61" fill="#fff">&amp;</text><text x="156" y="61">Incorporadora</text></g>
      </svg>
    </a>
    <a href="#summer" class="justify-self-end" aria-label="Summer comunicação">
      <svg class="h-[52px] w-[84px] overflow-visible" viewBox="0 -10 84 52" fill="#044b52" aria-hidden="true">
        <g font-family="Lato, sans-serif" font-style="italic" font-weight="900" transform="rotate(-8 0 28)"><text x="1" y="29" font-size="30">S</text><text x="18" y="21" font-size="22">ummer</text></g>
        <path d="M19 27.500C36 17.500 62 14.500 82 24.500 62 18 40 20.500 19 27.500Z" stroke="#044b52" stroke-width=".8"/>
        <text x="34" y="30" font-family="Lato, sans-serif" font-style="italic" font-size="7">comunicação</text>
      </svg>
    </a>
  </div>
</footer>
</body>
</html>
